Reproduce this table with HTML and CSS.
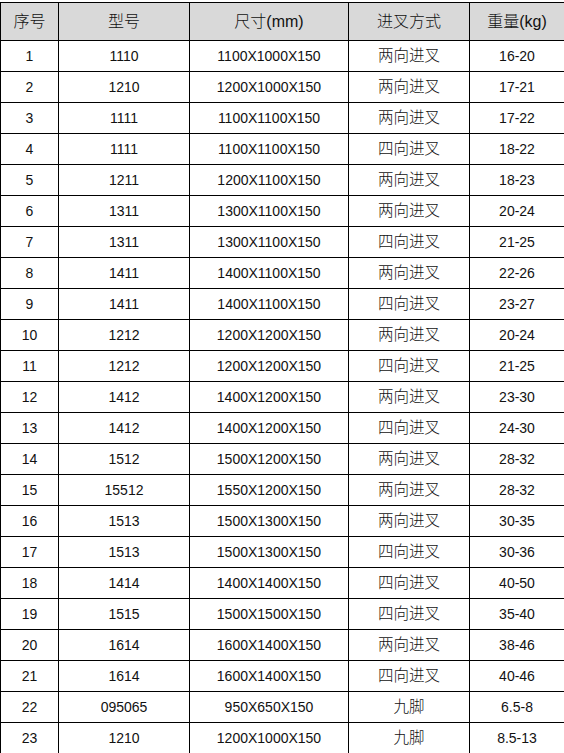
FILE: index.html
```html
<!DOCTYPE html>
<html lang="zh">
<head>
<meta charset="utf-8">
<link rel="stylesheet" href="styles.css">
</head>
<body>
<table class="spec">
<colgroup><col class="c1"><col class="c2"><col class="c3"><col class="c4"><col class="c5"></colgroup>
<thead><tr><th>序号</th><th>型号</th><th>尺寸(mm)</th><th>进叉方式</th><th>重量(kg)</th></tr></thead>
<tbody>
<tr><td>1</td><td>1110</td><td>1100X1000X150</td><td>两向进叉</td><td>16-20</td></tr>
<tr><td>2</td><td>1210</td><td>1200X1000X150</td><td>两向进叉</td><td>17-21</td></tr>
<tr><td>3</td><td>1111</td><td>1100X1100X150</td><td>两向进叉</td><td>17-22</td></tr>
<tr><td>4</td><td>1111</td><td>1100X1100X150</td><td>四向进叉</td><td>18-22</td></tr>
<tr><td>5</td><td>1211</td><td>1200X1100X150</td><td>两向进叉</td><td>18-23</td></tr>
<tr><td>6</td><td>1311</td><td>1300X1100X150</td><td>两向进叉</td><td>20-24</td></tr>
<tr><td>7</td><td>1311</td><td>1300X1100X150</td><td>四向进叉</td><td>21-25</td></tr>
<tr><td>8</td><td>1411</td><td>1400X1100X150</td><td>两向进叉</td><td>22-26</td></tr>
<tr><td>9</td><td>1411</td><td>1400X1100X150</td><td>四向进叉</td><td>23-27</td></tr>
<tr><td>10</td><td>1212</td><td>1200X1200X150</td><td>两向进叉</td><td>20-24</td></tr>
<tr><td>11</td><td>1212</td><td>1200X1200X150</td><td>四向进叉</td><td>21-25</td></tr>
<tr><td>12</td><td>1412</td><td>1400X1200X150</td><td>两向进叉</td><td>23-30</td></tr>
<tr><td>13</td><td>1412</td><td>1400X1200X150</td><td>四向进叉</td><td>24-30</td></tr>
<tr><td>14</td><td>1512</td><td>1500X1200X150</td><td>两向进叉</td><td>28-32</td></tr>
<tr><td>15</td><td>15512</td><td>1550X1200X150</td><td>两向进叉</td><td>28-32</td></tr>
<tr><td>16</td><td>1513</td><td>1500X1300X150</td><td>两向进叉</td><td>30-35</td></tr>
<tr><td>17</td><td>1513</td><td>1500X1300X150</td><td>四向进叉</td><td>30-36</td></tr>
<tr><td>18</td><td>1414</td><td>1400X1400X150</td><td>四向进叉</td><td>40-50</td></tr>
<tr><td>19</td><td>1515</td><td>1500X1500X150</td><td>四向进叉</td><td>35-40</td></tr>
<tr><td>20</td><td>1614</td><td>1600X1400X150</td><td>两向进叉</td><td>38-46</td></tr>
<tr><td>21</td><td>1614</td><td>1600X1400X150</td><td>四向进叉</td><td>40-46</td></tr>
<tr><td>22</td><td>095065</td><td>950X650X150</td><td>九脚</td><td>6.5-8</td></tr>
<tr><td>23</td><td>1210</td><td>1200X1000X150</td><td>九脚</td><td>8.5-13</td></tr>
</tbody>
</table>
</body>
</html>
```
FILE: styles.css
```css
html, body {
  margin: 0;
  padding: 0;
  background: #ffffff;
}
body {
  padding-top: 2px;
  font-family: "Liberation Sans", "Noto Sans CJK SC", sans-serif;
  font-size: 14px;
  color: #111111;
}
.spec {
  border-collapse: collapse;
  width: 564px;
  table-layout: fixed;
}
.c1 { width: 58px; }
.c2 { width: 131px; }
.c3 { width: 159px; }
.c4 { width: 121px; }
.c5 { width: 95px; }
.spec th, .spec td {
  border: 1px solid #000000;
  text-align: center;
  padding: 0;
  white-space: nowrap;
  line-height: 18px;
}
.spec th {
  background: #d9d9d9;
  font-weight: 300;
  font-size: 16px;
  height: 37px;
}
.spec td {
  height: 30px;
}
.spec td:nth-child(4) {
  font-size: 15.5px;
  font-weight: 300;
}
```
